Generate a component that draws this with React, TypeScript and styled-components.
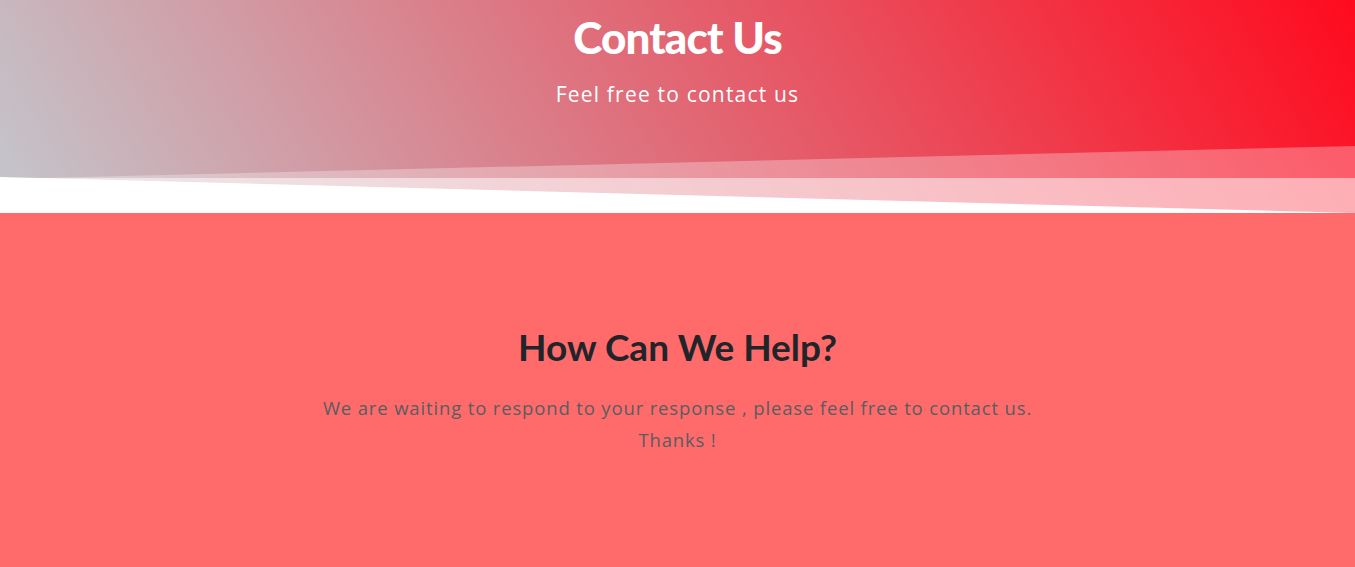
import React from "react";
import styled, { createGlobalStyle } from "styled-components";

const GlobalStyle = createGlobalStyle`
  html, body { margin: 0; padding: 0; background: #ffffff; }
  body { font-family: "Open Sans", "Liberation Sans", sans-serif; overflow: hidden; }
  * { box-sizing: border-box; }
`;

const Page = styled.div`
  display: flex;
  flex-direction: column;
  width: 100%;
`;

const Hero = styled.header`
  display: flex;
  flex-direction: column;
  align-items: center;
  background: linear-gradient(60deg, #c3c7cd 0%, #ff0a1e 100%);
  padding-top: 11px;
`;

const Title = styled.h1`
  margin: 0;
  font-family: "Lato", "Liberation Sans", sans-serif;
  font-weight: 900;
  font-size: 44px;
  line-height: 52px;
  letter-spacing: -0.9px;
  color: #ffffff;
`;

const Subtitle = styled.p`
  margin: 17px 0 0;
  font-family: "Open Sans", "Liberation Sans", sans-serif;
  font-size: 21px;
  line-height: 28px;
  letter-spacing: 1.2px;
  color: #ffffff;
`;

const Wave = styled.svg`
  display: block;
  width: 100%;
  height: 67px;
  margin-top: 38px;
`;

const HelpSection = styled.section`
  display: flex;
  flex-direction: column;
  align-items: center;
  background: #ff6b6b;
  padding: 112px 20px 120px;
`;

const HelpTitle = styled.h2`
  margin: 0;
  font-family: "Lato", "Liberation Sans", sans-serif;
  font-weight: 700;
  font-size: 37px;
  line-height: 44px;
  color: #212529;
`;

const HelpText = styled.p`
  margin: 23px 0 0;
  max-width: 800px;
  text-align: center;
  font-family: "Open Sans", "Liberation Sans", sans-serif;
  font-size: 18.5px;
  line-height: 32px;
  letter-spacing: 0.85px;
  color: #595d61;
`;

export default function App() {
  return (
    <Page>
      <GlobalStyle />
      <Hero>
        <Title>Contact Us</Title>
        <Subtitle>Feel free to contact us</Subtitle>
        <Wave viewBox="0 0 1353 67" preserveAspectRatio="none">
          <polygon points="0,33 1353,0 1353,67 0,67" fill="#ffffff" fillOpacity="0.3" />
          <polygon points="0,32 1353,32 1353,67 0,67" fill="#ffffff" fillOpacity="0.5" />
          <polygon points="0,31 1353,67 0,67" fill="#ffffff" />
        </Wave>
      </Hero>
      <HelpSection>
        <HelpTitle>How Can We Help?</HelpTitle>
        <HelpText>
          We are waiting to respond to your response , please feel free to contact us.
          <br />
          Thanks !
        </HelpText>
      </HelpSection>
    </Page>
  );
}
